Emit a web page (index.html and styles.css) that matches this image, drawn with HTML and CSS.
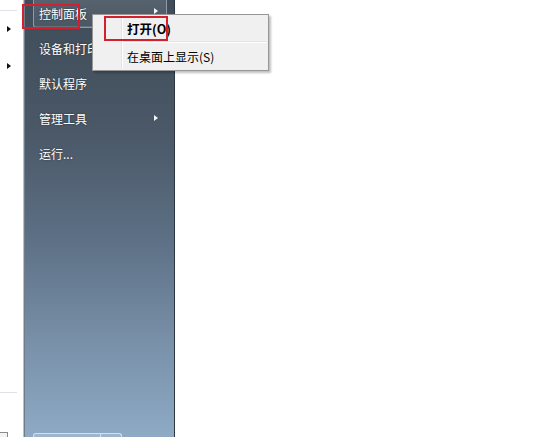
FILE: index.html
```html
<!DOCTYPE html>
<html lang="zh-CN">
<head>
<meta charset="utf-8">
<title>开始菜单</title>
<link rel="stylesheet" href="styles.css">
</head>
<body>
<div class="screen">
  <div class="left-pane">
    <div class="lp-line lp-top"></div>
    <div class="lp-arrow a1"></div>
    <div class="lp-arrow a2"></div>
    <div class="lp-spacer"></div>
    <div class="lp-line"></div>
    <div class="lp-foot"><div class="lp-box"></div></div>
  </div>
  <div class="right-pane">
    <ul class="menu-list">
      <li class="item item-hot"><span>控制面板</span><i class="sub"></i></li>
      <li class="item"><span>设备和打印机</span></li>
      <li class="item"><span>默认程序</span></li>
      <li class="item"><span>管理工具</span><i class="sub"></i></li>
      <li class="item"><span>运行...</span></li>
    </ul>
    <div class="shutdown"><div class="sd-main"></div><div class="sd-arrow"></div></div>
  </div>
  <div class="desktop"></div>

  <div class="ctx-menu">
    <div class="ctx-item ctx-first"><span class="bold">打开(O)</span></div>
    <div class="ctx-sep"></div>
    <div class="ctx-item"><span>在桌面上显示(S)</span></div>
  </div>

  <div class="mark mark-1"></div>
  <div class="mark mark-2"></div>
</div>
</body>
</html>
```

FILE: styles.css
```css
html, body {
  margin: 0;
  padding: 0;
  background: #fff;
}
body {
  font-family: "Noto Sans CJK SC", "Microsoft YaHei", sans-serif;
  font-size: 12px;
}
.screen {
  position: relative;
  width: 545px;
  height: 437px;
  overflow: hidden;
  display: flex;
}
.left-pane {
  width: 24px;
  height: 437px;
  background: #fff;
  border-right: 1px solid #b9c2cb;
  box-sizing: border-box;
  display: flex;
  flex-direction: column;
  position: relative;
}
.lp-line {
  height: 1px;
  width: 17px;
  background: #dfe3e8;
}
.lp-top {
  margin-top: 10px;
}
.lp-arrow {
  width: 0;
  height: 0;
  border-top: 3.5px solid transparent;
  border-bottom: 3.5px solid transparent;
  border-left: 4px solid #111;
  margin-left: 7px;
}
.a1 { margin-top: 15px; }
.a2 { margin-top: 31px; }
.lp-spacer { flex: 1; }
.lp-foot {
  height: 44px;
  display: flex;
  align-items: flex-end;
}
.lp-box {
  width: 7px;
  height: 4px;
  border: 1px solid #8a8a8a;
  border-bottom: none;
  border-left: none;
  background: #f3f3f3;
}
.right-pane {
  width: 151px;
  height: 437px;
  box-sizing: border-box;
  border-left: 1px solid #6f7c89;
  border-right: 1px solid #2c3540;
  background: linear-gradient(to bottom, #3f4c59 0%, #4a5867 30%, #5d7085 55%, #7890a8 78%, #8eaac5 100%);
  display: flex;
  flex-direction: column;
  position: relative;
}
.menu-list {
  list-style: none;
  margin: 0;
  padding: 0;
  display: flex;
  flex-direction: column;
  gap: 7px;
  flex: 1;
}
.item {
  height: 28px;
  display: flex;
  align-items: center;
  justify-content: space-between;
  padding: 0 8px 1px 5px;
  margin: 0 7px 0 8px;
  border: 1px solid transparent;
  border-top: none;
  box-sizing: border-box;
  color: #fff;
  text-shadow: 0 0 2px rgba(0,0,0,0.5);
  letter-spacing: 0;
}
.item-hot {
  border-color: #8e9aa6;
  border-radius: 0 0 3px 3px;
  background: linear-gradient(to bottom, #56636f, #4a5764);
  box-shadow: inset 0 -1px 0 rgba(255,255,255,0.15);
}
.sub {
  width: 0;
  height: 0;
  border-top: 3.5px solid transparent;
  border-bottom: 3.5px solid transparent;
  border-left: 4px solid #f4f6f8;
}
.item-hot .sub {
  align-self: flex-start;
  margin-top: 8px;
}
.shutdown {
  display: flex;
  height: 4px;
  margin-left: 8px;
}
.sd-main {
  width: 66px;
  border: 1px solid #d6dee6;
  border-bottom: none;
  border-radius: 3px 0 0 0;
  background: rgba(255,255,255,0.15);
}
.sd-arrow {
  width: 20px;
  border: 1px solid #d6dee6;
  border-left: none;
  border-bottom: none;
  border-radius: 0 3px 0 0;
  background: rgba(255,255,255,0.15);
}
.desktop {
  flex: 1;
  background: #fff;
}
.ctx-menu {
  position: absolute;
  left: 92px;
  top: 14px;
  width: 177px;
  height: 57px;
  box-sizing: border-box;
  border: 1px solid #979797;
  background: #f0f0f0;
  box-shadow: 2px 2px 2px rgba(0,0,0,0.25);
  display: flex;
  flex-direction: column;
  padding: 2px 2px 2px 2px;
  color: #000;
}
.ctx-menu::before {
  content: "";
  position: absolute;
  left: 28px;
  top: 2px;
  bottom: 2px;
  width: 1px;
  background: #e2e3e3;
  box-shadow: 1px 0 0 #fff;
}
.ctx-item {
  height: 25px;
  display: flex;
  align-items: center;
  padding-left: 32px;
  position: relative;
}
.ctx-first {
  height: 25px;
}
.bold {
  font-weight: bold;
  font-size: 12.5px;
}
.ctx-sep {
  height: 1px;
  margin: 1px 0 2px 28px;
  background: #e2e3e3;
  border-bottom: 1px solid #fff;
}
.mark {
  position: absolute;
  border: 2px solid #d3202e;
  box-sizing: border-box;
}
.mark-1 {
  left: 22px;
  top: 4px;
  width: 58px;
  height: 25px;
}
.mark-2 {
  left: 104px;
  top: 16px;
  width: 64px;
  height: 25px;
}
```
